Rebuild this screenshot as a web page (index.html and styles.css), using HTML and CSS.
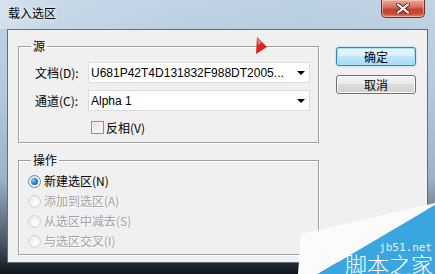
FILE: index.html
```html
<!DOCTYPE html>
<html lang="zh-CN">
<head>
<meta charset="utf-8">
<title>载入选区</title>
<link rel="stylesheet" href="styles.css">
</head>
<body>
<div class="window">
  <div class="titlebar">
    <span class="title">载入选区</span>
    <div class="close">
      <svg width="14" height="11" viewBox="0 0 14 11"><path d="M2 1.5 L12 9.5 M12 1.5 L2 9.5" stroke="#5a2a22" stroke-width="4" stroke-linecap="round"/><path d="M2 1.5 L12 9.5 M12 1.5 L2 9.5" stroke="#ffffff" stroke-width="2.2" stroke-linecap="round"/></svg>
    </div>
  </div>
  <div class="client">
    <div class="groups">
      <fieldset class="group group-src">
        <legend class="legend legend-src">源</legend>
        <div class="field-row">
          <span class="field-label">文档(D):</span>
          <div class="combo"><span class="combo-text">U681P42T4D131832F988DT2005...</span><span class="combo-arrow"></span></div>
        </div>
        <div class="field-row field-row-2">
          <span class="field-label">通道(C):</span>
          <div class="combo"><span class="combo-text">Alpha 1</span><span class="combo-arrow"></span></div>
        </div>
        <div class="check-row">
          <span class="checkbox"></span><span class="check-text">反相(V)</span>
        </div>
      </fieldset>
      <fieldset class="group group-op">
        <legend class="legend legend-op">操作</legend>
        <div class="radio-row"><span class="radio radio-on"><span class="radio-dot"></span></span><span class="radio-text">新建选区(N)</span></div>
        <div class="radio-row disabled"><span class="radio"></span><span class="radio-text">添加到选区(A)</span></div>
        <div class="radio-row disabled"><span class="radio"></span><span class="radio-text">从选区中减去(S)</span></div>
        <div class="radio-row disabled"><span class="radio"></span><span class="radio-text">与选区交叉(I)</span></div>
      </fieldset>
    </div>
    <div class="buttons">
      <div class="btn btn-default">确定</div>
      <div class="btn">取消</div>
    </div>
  </div>
  <div class="bottom-frame"></div>

  <svg class="cursor" width="14" height="20" viewBox="0 0 14 20"><polygon points="3,1 13,11 2,18" fill="#e0201c"/><polygon points="3,1 8,6 4,9" fill="#f07a70"/></svg>

  <div class="watermark">
    <svg class="wm-shape" width="140" height="72" viewBox="0 0 140 72"><polygon points="3,72 6,32 140,1 140,3 23,72" fill="#fbfbfb"/><polygon points="140,3 140,72 23,72" fill="#3aa6e0"/></svg>
    <span class="wm-url">jb51.net</span>
    <span class="wm-name">脚本之家</span>
  </div>
</div>
</body>
</html>
```
FILE: styles.css
```css
html, body {
  margin: 0;
  padding: 0;
  background: #1c232b;
}
.window {
  position: relative;
  width: 435px;
  height: 274px;
  overflow: hidden;
  display: flex;
  flex-direction: column;
  background: linear-gradient(180deg, #c2d4e6 0%, #b3c8dc 35%, #9cb2c6 65%, #4a5866 88%, #10161c 100%);
  font-family: "Noto Sans CJK SC", "Liberation Sans", sans-serif;
  font-size: 12px;
  color: #000;
}
.titlebar {
  height: 29px;
  flex: none;
  display: flex;
  align-items: flex-start;
  background: linear-gradient(90deg, rgba(230,238,245,0.55) 0%, rgba(210,224,236,0.35) 12%, rgba(180,200,220,0.1) 40%, rgba(170,195,218,0.2) 70%, rgba(190,208,225,0.2) 100%);
}
.title {
  padding: 5px 0 0 8px;
  line-height: 16px;
  font-size: 12px;
  color: #000;
  text-shadow: 0 0 6px #e8f0f6, 0 0 3px #eef4f8;
}
.close {
  margin-left: auto;
  margin-right: 10px;
  width: 44px;
  height: 18px;
  box-sizing: border-box;
  border: 1px solid #6a3128;
  border-top: none;
  border-radius: 0 0 5px 5px;
  background: linear-gradient(180deg, #e9a99a 0%, #d8735f 40%, #c4412b 55%, #c84a33 80%, #e08a72 100%);
  box-shadow: inset 0 0 0 1px rgba(255,220,210,0.5);
  display: flex;
  align-items: center;
  justify-content: center;
}
.client {
  flex: none;
  height: 234px;
  margin: 0 7px;
  box-sizing: border-box;
  border: 1px solid #5f6f7e;
  background: #f0f0f0;
  display: flex;
  align-items: flex-start;
}
.bottom-frame {
  flex: 1;
}
.groups {
  padding: 9px 0 0 10px;
  display: flex;
  flex-direction: column;
  gap: 10px;
}
.group {
  margin: 0;
  width: 301px;
  box-sizing: border-box;
  border: 1px solid #a0a0a0;
  box-shadow: 1px 1px 0 #ffffff, inset 1px 1px 0 #ffffff;
  min-width: 0;
}
.group-src {
  padding: 9px 8px 6px 16px;
}
.group-op {
  padding: 4px 8px 3px 9px;
}
.legend {
  padding: 0 2px;
  line-height: 14px;
  font-size: 12px;
}
.legend-src {
  margin-left: -4px;
}
.legend-op {
  margin-left: 3px;
}
.field-row {
  display: flex;
  align-items: center;
  height: 21px;
}
.field-row-2 {
  margin-top: 7px;
}
.field-label {
  width: 53px;
  flex: none;
  line-height: 16px;
}
.combo {
  width: 222px;
  height: 21px;
  box-sizing: border-box;
  border: 1px solid #dcdcdc;
  background: #ffffff;
  display: flex;
  align-items: center;
  padding: 0 0 0 2px;
}
.combo-text {
  flex: 1;
  font-family: "Liberation Sans", sans-serif;
  font-size: 12px;
  line-height: 14px;
  white-space: nowrap;
  overflow: hidden;
}
.combo-arrow {
  width: 0;
  height: 0;
  margin: 1px 4px 0 6px;
  border-left: 4px solid transparent;
  border-right: 4px solid transparent;
  border-top: 4px solid #000;
}
.check-row {
  margin-top: 8px;
  height: 17px;
  display: flex;
  align-items: center;
  padding-left: 56px;
}
.checkbox {
  width: 13px;
  height: 13px;
  box-sizing: border-box;
  border: 1px solid #8e8f8f;
  background: linear-gradient(135deg, #dcdcdc 0%, #f2f2f2 60%, #ffffff 100%);
  box-shadow: inset 0 0 0 1px #f4f4f4;
  flex: none;
}
.check-text {
  margin-left: 2px;
  line-height: 16px;
}
.radio-row {
  height: 20px;
  display: flex;
  align-items: center;
}
.radio {
  width: 13px;
  height: 13px;
  box-sizing: border-box;
  border-radius: 50%;
  border: 1px solid #d2d2d2;
  background: radial-gradient(circle at 60% 65%, #ffffff 0%, #f2f2f2 50%, #e6e6e6 100%);
  display: flex;
  align-items: center;
  justify-content: center;
  flex: none;
}
.radio-on {
  border-color: #7b8a99;
  background: radial-gradient(circle at 60% 65%, #ffffff 0%, #eef2f5 50%, #cfd7de 100%);
}
.radio-dot {
  width: 7px;
  height: 7px;
  border-radius: 50%;
  background: radial-gradient(circle at 35% 35%, #8fd0f6 0%, #2a86d4 45%, #0c4a99 100%);
}
.radio-text {
  margin-left: 3px;
  line-height: 16px;
}
.disabled .radio-text {
  color: #a3a3a3;
  text-shadow: 1px 1px 0 #ffffff;
}
.buttons {
  margin-left: 17px;
  padding-top: 17px;
  display: flex;
  flex-direction: column;
  gap: 9px;
}
.btn {
  width: 80px;
  height: 19px;
  box-sizing: border-box;
  border: 1px solid #707070;
  border-radius: 3px;
  background: linear-gradient(180deg, #f2f2f2 0%, #ebebeb 45%, #dddddd 50%, #cfcfcf 100%);
  box-shadow: inset 0 0 0 1px #fbfbfb;
  display: flex;
  align-items: center;
  justify-content: center;
  line-height: 16px;
}
.btn-default {
  border-color: #3c7fb1;
  background: linear-gradient(180deg, #e8f6fd 0%, #d9f0fc 45%, #bee6fd 50%, #a7d9f5 100%);
  box-shadow: inset 0 0 0 1px #a9e2f8, 0 0 2px #7fc6ec;
}
.cursor {
  position: absolute;
  left: 254px;
  top: 36px;
}
.watermark {
  position: absolute;
  right: 0;
  bottom: 0;
  width: 140px;
  height: 72px;
  box-sizing: border-box;
  padding-bottom: 1px;
  display: flex;
  flex-direction: column;
  align-items: flex-end;
  justify-content: flex-end;
}
.wm-shape {
  position: absolute;
  left: 0;
  top: 0;
}
.wm-url {
  position: relative;
  margin-right: 3px;
  font-family: "DejaVu Sans Mono", monospace;
  font-size: 11px;
  line-height: 11px;
  color: #e6f3fb;
}
.wm-name {
  position: relative;
  margin-right: 2px;
  font-family: "Noto Sans CJK SC", sans-serif;
  font-size: 22px;
  line-height: 20px;
  font-weight: 300;
  color: #ffffff;
}
```
